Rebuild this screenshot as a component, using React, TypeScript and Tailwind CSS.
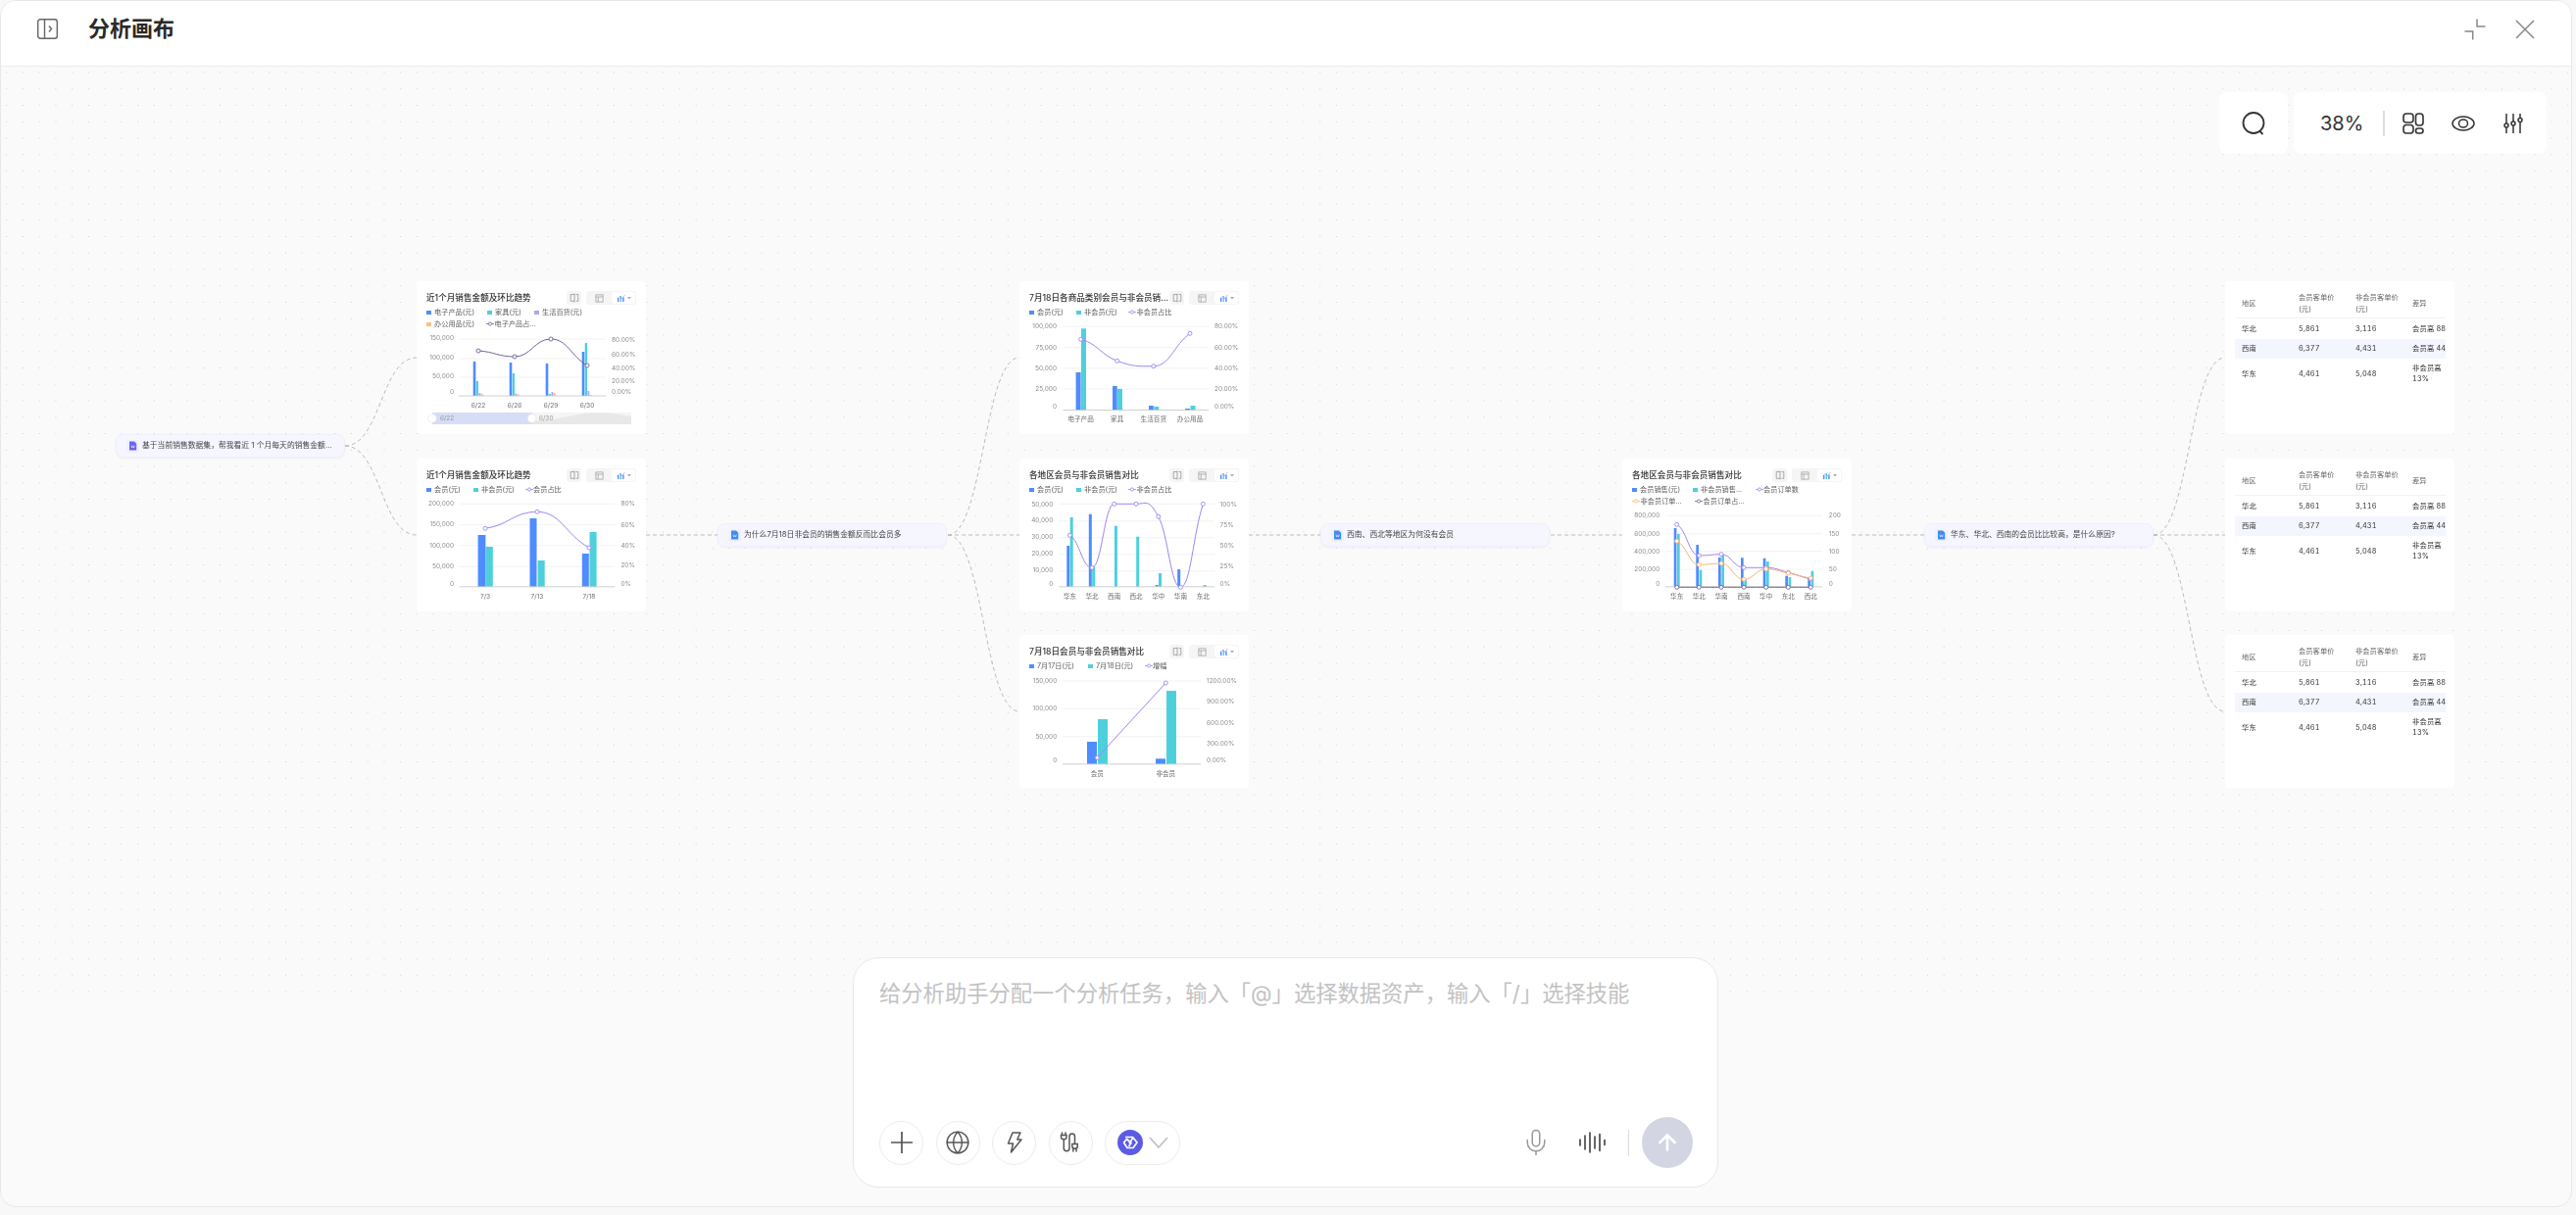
import { ReactNode } from 'react';
import { Mic, ArrowUp, Globe } from 'lucide-react';

const BLUE = '#4f8cff';
const CYAN = '#4ed0dc';
const PURPLE = '#a084f2';
const LILAC = '#b5a2f0';
const ORANGE = '#ffbe85';
const DARK = '#6f6299';

type Legend = { label: string; color: string; line?: boolean; width?: string };
type Bar = [number, number, number, string];
type Series = { color: string; pts: [number, number][]; straight?: boolean };
type ChartDef = {
  title: string;
  legend: Legend[][];
  grid: number[];
  gridX: [number, number];
  left: [string, number][];
  leftEnd: number;
  right: [string, number][];
  rightX: number;
  cats: [string, number][];
  catY: number;
  bars: Bar[];
  lines: Series[];
  slider?: boolean;
};

// monotone-ish curve, flat at local extremes like echarts smooth lines
function linePath(pts: [number, number][], straight?: boolean) {
  if (straight) return pts.map((p, i) => `${i ? 'L' : 'M'}${p[0]} ${p[1]}`).join(' ');
  const slope = pts.map((p, i) => {
    if (i === 0) return ((pts[1][1] - p[1]) / (pts[1][0] - p[0])) * 0.4;
    if (i === pts.length - 1) return ((p[1] - pts[i - 1][1]) / (p[0] - pts[i - 1][0])) * 0.8;
    const a = p[1] - pts[i - 1][1];
    const b = pts[i + 1][1] - p[1];
    if (a * b <= 0) return 0;
    return (pts[i + 1][1] - pts[i - 1][1]) / (pts[i + 1][0] - pts[i - 1][0]);
  });
  let d = `M${pts[0][0]} ${pts[0][1]}`;
  for (let i = 1; i < pts.length; i++) {
    const [x0, y0] = pts[i - 1];
    const [x1, y1] = pts[i];
    const dx = (x1 - x0) * 0.45;
    d += ` C${x0 + dx} ${y0 + slope[i - 1] * dx} ${x1 - dx} ${y1 - slope[i] * dx} ${x1} ${y1}`;
  }
  return d;
}

const memberLegend = (third: string): Legend[][] => [
  [
    { label: '会员(元)', color: BLUE, width: 'w-[48px]' },
    { label: '非会员(元)', color: CYAN, width: 'w-[53px]' },
    { label: third, color: PURPLE, line: true },
  ],
];

const charts: Record<string, ChartDef> = {
  trend: {
    title: '近1个月销售金额及环比趋势',
    legend: [
      [
        { label: '电子产品(元)', color: BLUE, width: 'w-[62px]' },
        { label: '家具(元)', color: CYAN, width: 'w-[48px]' },
        { label: '生活百货(元)', color: LILAC },
      ],
      [
        { label: '办公用品(元)', color: ORANGE, width: 'w-[61px]' },
        { label: '电子产品占...', color: DARK, line: true },
      ],
    ],
    grid: [59, 79, 98],
    gridX: [43, 193],
    left: [['150,000', 58], ['100,000', 78], ['50,000', 97], ['0', 113]],
    leftEnd: 38,
    right: [['80.00%', 60], ['60.00%', 75], ['40.00%', 89], ['20.00%', 102], ['0.00%', 113]],
    rightX: 199,
    cats: [['6/22', 63], ['6/26', 100], ['6/29', 137], ['6/30', 174]],
    catY: 127,
    bars: [
      [57.7, 60.3, 82, BLUE], [60.7, 63, 102, CYAN], [63.5, 65.3, 114, LILAC], [65.7, 67.7, 115, ORANGE],
      [94.7, 97.3, 83, BLUE], [97.7, 100, 94, CYAN], [100.5, 102.3, 114.5, LILAC], [102.7, 104.7, 115.5, ORANGE],
      [131.7, 134.3, 84, BLUE], [134.7, 137, 115, CYAN], [137.5, 139.3, 113, LILAC], [139.7, 141.7, 114, ORANGE],
      [168.7, 171.3, 72, BLUE], [171.7, 174, 63, CYAN], [174.5, 176.3, 112, LILAC], [176.7, 178.7, 116, ORANGE],
    ],
    lines: [{ color: DARK, pts: [[63, 71], [100, 77], [137, 59], [174, 86]] }],
    slider: true,
  },
  monthly: {
    title: '近1个月销售金额及环比趋势',
    legend: [
      [
        { label: '会员(元)', color: BLUE, width: 'w-[48px]' },
        { label: '非会员(元)', color: CYAN, width: 'w-[52.5px]' },
        { label: '会员占比', color: PURPLE, line: true },
      ],
    ],
    grid: [46.3, 67.7, 88.7, 110.3],
    gridX: [43.7, 202.4],
    left: [['200,000', 46], ['150,000', 67], ['100,000', 88.7], ['50,000', 109.3], ['0', 127.3]],
    leftEnd: 38,
    right: [['80%', 46], ['60%', 67.7], ['40%', 88.7], ['20%', 109], ['0%', 127.3]],
    rightX: 208.4,
    cats: [['7/3', 70], ['7/13', 123], ['7/18', 176]],
    catY: 140.3,
    bars: [
      [62.6, 70.4, 78, BLUE], [70.4, 77.8, 90, CYAN],
      [115.5, 122.5, 61, BLUE], [123.6, 130.7, 104, CYAN],
      [168.8, 175.8, 97, BLUE], [176.5, 183.6, 75, CYAN],
    ],
    lines: [{ color: PURPLE, pts: [[70, 71.3], [123, 54.3], [176, 91]] }],
  },
  category: {
    title: '7月18日各商品类别会员与非会员销售额对比',
    legend: memberLegend('非会员占比'),
    grid: [46.3, 67.7, 88.7, 110],
    gridX: [44.6, 193],
    left: [['100,000', 46], ['75,000', 67.3], ['50,000', 88.7], ['25,000', 109.7], ['0', 127.3]],
    leftEnd: 38,
    right: [['80.00%', 46], ['60.00%', 67.3], ['40.00%', 88.7], ['20.00%', 110], ['0.00%', 127.3]],
    rightX: 199,
    cats: [['电子产品', 62.6], ['家具', 99.7], ['生活百货', 136.8], ['办公用品', 174]],
    catY: 141,
    bars: [
      [57.6, 62.6, 93, BLUE], [63, 68, 48.3, CYAN],
      [95, 99.7, 107, BLUE], [100, 105, 110, CYAN],
      [132, 136.8, 127, BLUE], [137.3, 142.3, 128, CYAN],
      [169, 174, 130, BLUE], [174.5, 179.5, 127, CYAN],
    ],
    lines: [{ color: PURPLE, pts: [[62.6, 59.3], [99.7, 81.3], [136.8, 86.7], [174, 53.3]] }],
  },
  region: {
    title: '各地区会员与非会员销售对比',
    legend: memberLegend('非会员占比'),
    grid: [46.3, 63.7, 80.7, 97.7, 114.7],
    gridX: [40, 199],
    left: [['50,000', 46.3], ['40,000', 63], ['30,000', 80], ['20,000', 97], ['10,000', 114], ['0', 127.7]],
    leftEnd: 34.3,
    right: [['100%', 46.3], ['75%', 67.7], ['50%', 88.7], ['25%', 109.3], ['0%', 127.3]],
    rightX: 204.6,
    cats: [['华东', 51.5], ['华北', 74], ['西南', 96.7], ['西北', 119], ['华中', 141.8], ['华南', 164.4], ['东北', 187.4]],
    catY: 140.3,
    bars: [
      [48.3, 51.3, 89, BLUE], [51.7, 54.7, 60, CYAN],
      [70.8, 73.8, 56.7, BLUE], [74.2, 77.2, 110.3, CYAN],
      [96.9, 99.9, 68.7, CYAN],
      [119.2, 122.2, 79.7, CYAN],
      [138.6, 141.6, 129, BLUE], [142, 145, 117, CYAN],
      [161.2, 164.2, 113, BLUE],
      [187.6, 190.6, 129, CYAN],
    ],
    lines: [{ color: PURPLE, pts: [[51.5, 78.3], [74, 111.3], [96.7, 46.3], [119, 46.3], [141.8, 59.3], [164.4, 131.3], [187.4, 46.3]] }],
  },
  compare: {
    title: '7月18日会员与非会员销售对比',
    legend: [
      [
        { label: '7月17日(元)', color: BLUE, width: 'w-[60px]' },
        { label: '7月18日(元)', color: CYAN, width: 'w-[57.5px]' },
        { label: '增幅', color: PURPLE, line: true },
      ],
    ],
    grid: [47, 75.3, 103.7],
    gridX: [44, 185],
    left: [['150,000', 46.7], ['100,000', 75], ['50,000', 103.3], ['0', 128]],
    leftEnd: 38.3,
    right: [['1200.00%', 46.7], ['900.00%', 68], ['600.00%', 89.3], ['300.00%', 110.3], ['0.00%', 128]],
    rightX: 191,
    cats: [['会员', 79.3], ['非会员', 149.3]],
    catY: 141.3,
    bars: [
      [69, 79, 109, BLUE], [80, 90, 86, CYAN],
      [139, 149, 126.3, BLUE], [150, 160, 57, CYAN],
    ],
    lines: [{ color: PURPLE, straight: true, pts: [[79.3, 125.3], [149.3, 49]] }],
  },
  orders: {
    title: '各地区会员与非会员销售对比',
    legend: [
      [
        { label: '会员销售(元)', color: BLUE, width: 'w-[62px]' },
        { label: '非会员销售...', color: CYAN, width: 'w-[63.5px]' },
        { label: '会员订单数', color: PURPLE, line: true },
      ],
      [
        { label: '非会员订单...', color: '#ffb26b', line: true, width: 'w-[64px]' },
        { label: '会员订单占...', color: DARK, line: true },
      ],
    ],
    grid: [58.3, 76.7, 94.7, 113],
    gridX: [44, 204],
    left: [['800,000', 58], ['600,000', 76.3], ['400,000', 94.3], ['200,000', 112.7], ['0', 127.7]],
    leftEnd: 38.3,
    right: [['200', 58], ['150', 76.3], ['100', 94.3], ['50', 112.7], ['0', 127.7]],
    rightX: 210.7,
    cats: [['华东', 55.7], ['华北', 78.3], ['华南', 101], ['西南', 124], ['华中', 146.7], ['东北', 169.3], ['西北', 192.3]],
    catY: 140.3,
    bars: [
      [52.7, 55.4, 71, BLUE], [56, 58.7, 77, CYAN],
      [75.3, 78, 88, BLUE], [78.6, 81.3, 113.7, CYAN],
      [98, 100.7, 101, BLUE], [101.3, 104, 98.7, CYAN],
      [121, 123.7, 101.3, BLUE], [124.3, 127, 123.7, CYAN],
      [143.7, 146.4, 101.7, BLUE], [147, 149.7, 105, CYAN],
      [166.3, 169, 119.7, BLUE], [169.6, 172.3, 121, CYAN],
      [189.3, 192, 122, BLUE], [192.6, 195.3, 114.7, CYAN],
    ],
    lines: [
      { color: DARK, pts: [[55.7, 131.3], [78.3, 131.3], [101, 131.3], [124, 131.3], [146.7, 131.3], [169.3, 131.3], [192.3, 131.3]] },
      { color: PURPLE, pts: [[55.7, 67.3], [78.3, 99], [101, 97.7], [124, 111.3], [146.7, 111.3], [169.3, 116.3], [192.3, 123]] },
      { color: '#ffb26b', pts: [[55.7, 84.3], [78.3, 108.3], [101, 107], [124, 123.3], [146.7, 112.7], [169.3, 117], [192.3, 122]] },
    ],
  },
};

function MiniTools() {
  return (
    <div className="flex shrink-0 items-center gap-[5px]">
      <div className="flex h-[14px] w-[15px] items-center justify-center rounded-[3px] bg-[#f5f5f5]">
        <svg width="10" height="10" viewBox="0 0 10 10" fill="none" stroke="#888" strokeWidth="0.7">
          <path d="M5 1.5 H1.2 V8.3 H5 M5 0.6 V9.4 M6.6 1.5 H8.8 V8.3 H6.6" />
        </svg>
      </div>
      <div className="flex h-[14px] w-[51px] items-center rounded-[3px] bg-[#f5f5f5] px-[1px]">
        <div className="flex flex-1 justify-center">
          <svg width="9" height="9" viewBox="0 0 9 9" fill="none" stroke="#999" strokeWidth="0.7">
            <rect x="0.9" y="0.9" width="7.2" height="7.2" />
            <path d="M0.9 3 H8.1 M3.2 3 V8.1" />
          </svg>
        </div>
        <div className="flex h-[12.5px] w-[24px] items-center justify-center gap-[2px] rounded-[3px] bg-white">
          <svg width="9" height="8" viewBox="0 0 9 8">
            <rect x="1" y="4" width="1.4" height="4" fill={BLUE} />
            <rect x="3.6" y="2" width="1.4" height="6" fill={CYAN} />
            <rect x="6.2" y="3.5" width="1.4" height="4.5" fill={BLUE} />
            <path d="M0.5 5 L3 2.5 L5 5 L8.5 1" fill="none" stroke={PURPLE} strokeWidth="0.6" />
          </svg>
          <svg width="4" height="3" viewBox="0 0 4 3">
            <path d="M0 0 H4 L2 2.5 Z" fill="#aaa" />
          </svg>
        </div>
      </div>
    </div>
  );
}

function LegendItem({ item }: { item: Legend }) {
  return (
    <div className={`flex items-center ${item.width ?? ''}`}>
      {item.line ? (
        <svg width="8" height="5" viewBox="0 0 8 5" className="shrink-0">
          <path d="M0 2.5 H8" stroke={item.color} strokeWidth="0.8" />
          <circle cx="4" cy="2.5" r="1.6" fill="#fff" stroke={item.color} strokeWidth="0.8" />
        </svg>
      ) : (
        <span className="h-[4.5px] w-[4.5px] shrink-0" style={{ background: item.color }} />
      )}
      <span className={`whitespace-nowrap text-[7.2px] text-[#5c5c5c] ${item.line ? 'ml-[0.5px]' : 'ml-[3.5px]'}`}>{item.label}</span>
    </div>
  );
}

function ChartCard({ def, className }: { def: ChartDef; className: string }) {
  const top = def.legend.length === 2 ? 50 : 38;
  const baseline = def.slider ? 117 : def.catY - 9.5;
  return (
    <div className={`absolute flex h-[156px] w-[234px] flex-col rounded-[4px] bg-white blur-[0.2px] ${className}`}>
      <div className="px-[10px] pt-[10px]">
        <div className="flex h-[14px] items-center">
          <div className="min-w-0 flex-1 truncate text-[8.6px] font-medium text-[#333]">{def.title}</div>
          <MiniTools />
        </div>
        <div className="mt-[2px]">
          {def.legend.map((row, i) => (
            <div key={i} className="flex h-[12px] items-center">
              {row.map(item => <LegendItem key={item.label} item={item} />)}
            </div>
          ))}
        </div>
      </div>
      <svg viewBox={`0 ${top} 234 ${156 - top}`} className="block min-h-0 w-full flex-1">
        {def.grid.map(y => <line key={y} x1={def.gridX[0]} x2={def.gridX[1]} y1={y} y2={y} stroke="#eeeeee" strokeWidth="0.7" />)}
        {def.left.map(([t, y]) => <text key={t} x={def.leftEnd} y={y} dy="2.3" textAnchor="end" fontSize="6.5" fill="#8c8c8c">{t}</text>)}
        {def.right.map(([t, y]) => <text key={t} x={def.rightX} y={y} dy="2.3" fontSize="6.5" fill="#8c8c8c">{t}</text>)}
        {def.bars.map(([x0, x1, y, c], i) => <rect key={i} x={x0} y={y} width={x1 - x0} height={baseline - y} fill={c} />)}
        <line x1={def.gridX[0]} x2={def.gridX[1]} y1={baseline} y2={baseline} stroke="#c4c4c4" strokeWidth="0.8" />
        {def.cats.map(([t, x]) => <text key={t} x={x} y={def.catY} dy="2.3" textAnchor="middle" fontSize="6.6" fill="#6e6e6e">{t}</text>)}
        {def.lines.map((s, i) => (
          <g key={i}>
            <path d={linePath(s.pts, s.straight)} fill="none" stroke={s.color} strokeWidth="1" />
            {s.pts.map(([x, y], j) => <circle key={j} cx={x} cy={y} r="2" fill="#fff" stroke={s.color} strokeWidth="0.9" />)}
          </g>
        ))}
        {def.slider && (
          <g>
            <rect x="16" y="134" width="203" height="12" fill="#f5f5f5" />
            <path d="M60 146 C90 146 110 143 140 141 C155 138 170 134 185 134 C200 134 210 137 219 138 V146 Z" fill="#e8e8e8" />
            <rect x="16" y="134" width="102" height="12" fill="#d6def7" />
            <circle cx="16" cy="140" r="4.4" fill="#fff" stroke="#ddd" strokeWidth="0.5" />
            <circle cx="117.5" cy="140" r="4.4" fill="#fff" stroke="#ddd" strokeWidth="0.5" />
            <text x="24" y="142.3" fontSize="6.5" fill="#999">6/22</text>
            <text x="125" y="142.3" fontSize="6.5" fill="#999">6/30</text>
          </g>
        )}
      </svg>
    </div>
  );
}

const tableRows = [
  ['华北', '5,861', '3,116', '会员高 88%'],
  ['西南', '6,377', '4,431', '会员高 44%'],
  ['华东', '4,461', '5,048', '非会员高 13%'],
];

function TableCard({ className }: { className: string }) {
  return (
    <div className={`absolute h-[156px] w-[234px] rounded-[4px] bg-white pl-[10px] pt-[8px] tabular-nums blur-[0.2px] ${className}`}>
      <div className="w-[215px] overflow-hidden">
        <table className="w-[232px] table-fixed border-collapse text-[7.3px] leading-[11.4px]">
          <thead>
            <tr className="h-[29.5px] border-b border-[#f2f2f2] text-left text-[#666]">
              <th className="px-[7px] font-normal">地区</th>
              <th className="px-[7px] font-normal">会员客单价<br />(元)</th>
              <th className="whitespace-nowrap px-[7px] font-normal">非会员客单价<br />(元)</th>
              <th className="px-[7px] font-normal">差异</th>
            </tr>
          </thead>
          <tbody className="text-[#333]">
            {tableRows.map((row, i) => (
              <tr key={row[0]} className={i === 1 ? 'h-[20px] bg-[#f3f6fd]' : i === 0 ? 'h-[21.5px]' : 'h-[30.5px]'}>
                {row.map(cell => <td key={cell} className="px-[7px] tracking-[0.15px]">{cell}</td>)}
              </tr>
            ))}
          </tbody>
        </table>
      </div>
    </div>
  );
}

function NodeIcon({ color }: { color: string }) {
  return (
    <div className="flex h-[13px] w-[13px] shrink-0 items-center justify-center rounded-[3px] bg-[#eef0fb]">
      <svg width="9" height="10" viewBox="0 0 9 10">
        <path d="M1 0.5 H6 L8.2 2.7 V9.5 H1 Z" fill={color} />
        <path d="M3 4.5 L3.6 7 L4.6 5.4 L5.6 7 L6.2 4.5" fill="none" stroke="#fff" strokeWidth="0.6" />
      </svg>
    </div>
  );
}

function QuestionNode({ text, color, className }: { text: string; color: string; className: string }) {
  return (
    <div className={`absolute flex h-[24px] w-[234px] items-center gap-[3px] rounded-[8px] border border-[#eff0fa] bg-[#f5f6ff] pl-[10px] shadow-[0_1px_2px_rgba(90,90,160,0.08)] blur-[0.15px] ${className}`}>
      <NodeIcon color={color} />
      <span className="whitespace-nowrap text-[7.8px] text-[#444]">{text}</span>
    </div>
  );
}

function curve(x0: number, y0: number, x1: number, y1: number) {
  const mid = (x0 + x1) / 2;
  return `M${x0} ${y0} C${mid} ${y0} ${mid} ${y1} ${x1} ${y1}`;
}

// canvas coordinates: page x - 1, page y - 68
const edges = [
  curve(351, 387, 424, 297), curve(351, 387, 424, 478),
  curve(658, 478, 731, 478),
  curve(966, 478, 1039, 297), curve(966, 478, 1039, 478), curve(966, 478, 1039, 658),
  curve(1273, 478, 1346, 478),
  curve(1581, 478, 1654, 478),
  curve(1888, 478, 1962, 478),
  curve(2196, 478, 2269, 297), curve(2196, 478, 2269, 478), curve(2196, 478, 2269, 658),
];

function RoundBtn({ children, className = 'w-[45px]' }: { children: ReactNode; className?: string }) {
  return (
    <button className={`flex h-[45px] items-center justify-center rounded-full border border-[#ececec] bg-white ${className}`}>
      {children}
    </button>
  );
}

function Composer() {
  return (
    <div className="absolute bottom-[19px] left-[869px] flex h-[235px] w-[883px] flex-col justify-between rounded-[26px] border border-[#e8e8e8] bg-white pb-[19px] pl-[26px] pr-[25px] pt-[21px]">
      <div className="text-[22.3px] leading-[30px] text-[#c2c2c2]">给分析助手分配一个分析任务，输入「@」选择数据资产，输入「/」选择技能</div>
      <div className="flex items-center">
        <div className="flex items-center gap-[12.5px]">
          <RoundBtn>
            <svg width="24" height="24" viewBox="0 0 24 24" stroke="#555" strokeWidth="1.7">
              <path d="M1 12 H23 M12 1 V23" />
            </svg>
          </RoundBtn>
          <RoundBtn><Globe size={26} strokeWidth={1.3} color="#555" /></RoundBtn>
          <RoundBtn>
            <svg width="24" height="24" viewBox="0 0 24 24" fill="none" stroke="#555" strokeWidth="1.5" strokeLinejoin="round">
              <path d="M10 2 H18 L14.8 9 H19 L8.5 22 L10.5 13 H5.5 Z" />
            </svg>
          </RoundBtn>
          <RoundBtn>
            <svg width="24" height="24" viewBox="0 0 24 24" fill="none" stroke="#555" strokeWidth="1.5" strokeLinecap="round">
              <path d="M3.5 2 V4.5 M7 2 V4.5 M2.5 4.5 H8 V6.5 C8 8 6.8 8.8 5.3 8.8 C3.8 8.8 2.5 8 2.5 6.5 Z" />
              <path d="M5.3 9 V18 C5.3 21.5 11 21.5 11 18 V6 C11 2 16.5 2 16.5 6 V13.5" />
              <path d="M13.8 13.5 H19.3 V15.8 C19.3 17.3 18 18.3 16.5 18.3 C15 18.3 13.8 17.3 13.8 15.8 Z M14.9 18.3 V21 M18.1 18.3 V21" />
            </svg>
          </RoundBtn>
          <RoundBtn className="w-[77px] gap-[6px]">
            <svg width="26" height="26" viewBox="0 0 26 26" fill="none">
              <circle cx="13" cy="13" r="13" fill="#5c5be5" />
              <path d="M8 7.5 H15.5 L20 13 L16 18.5 H10 L6.5 13 L9.5 9.5 L14 13.5 L11.5 17 M16 8 L12 14" stroke="#fff" strokeWidth="1.7" strokeLinejoin="round" />
            </svg>
            <svg width="20" height="12" viewBox="0 0 20 12" fill="none" stroke="#bbb" strokeWidth="1.5">
              <path d="M1 1 L10 11 L19 1" />
            </svg>
          </RoundBtn>
        </div>
        <div className="ml-auto flex items-center">
          <Mic size={30} strokeWidth={1.2} color="#999" />
          <svg width="30" height="24" viewBox="0 0 30 24" stroke="#333" strokeWidth="1.5" strokeLinecap="round" className="ml-[28px]">
            <path d="M2 9 V15 M7 5 V19 M12 2 V22 M17 6 V18 M22 3.5 V20.5 M27 9.5 V14.5" />
          </svg>
          <div className="ml-[21px] h-[27px] w-px bg-[#ddd]" />
          <div className="ml-[13px] flex h-[52px] w-[52px] items-center justify-center rounded-full bg-[#d3d6e2]">
            <ArrowUp size={26} strokeWidth={2.4} color="#fff" />
          </div>
        </div>
      </div>
    </div>
  );
}

function ZoomTools() {
  return (
    <div className="absolute right-[25px] top-[26px] flex gap-[6px]">
      <div className="flex h-[63px] w-[70px] items-center justify-center rounded-[8px] bg-white">
        <svg width="26" height="26" viewBox="0 0 26 26" fill="none" stroke="#333" strokeWidth="1.8">
          <circle cx="13" cy="12.5" r="10.5" />
          <path d="M19.5 21 L22.5 24" />
        </svg>
      </div>
      <div className="flex h-[63px] w-[258px] items-center rounded-[8px] bg-white pl-[27px]">
        <span className="w-[44px] text-[20px] text-[#333]">38%</span>
        <div className="ml-[20px] h-[26px] w-[2px] bg-[#ddd]" />
        <svg width="22" height="22" viewBox="0 0 22 22" fill="none" stroke="#333" strokeWidth="1.6" className="ml-[18px]">
          <rect x="1" y="1" width="10" height="9" rx="3" />
          <rect x="1" y="12.5" width="10" height="8.5" rx="3" />
          <rect x="13.5" y="1" width="7.5" height="12" rx="3" />
          <rect x="13.5" y="16" width="7.5" height="5" rx="2.5" />
        </svg>
        <svg width="24" height="16" viewBox="0 0 24 16" fill="none" stroke="#333" strokeWidth="1.5" className="ml-[28px]">
          <ellipse cx="12" cy="8" rx="11" ry="7" />
          <ellipse cx="12" cy="8" rx="4.5" ry="4" />
        </svg>
        <svg width="22" height="22" viewBox="0 0 22 22" fill="none" stroke="#333" strokeWidth="1.5" className="ml-[28px]">
          <path d="M4 1 V21 M11 1 V21 M18 1 V21" />
          <circle cx="4" cy="13" r="2" fill="#fff" />
          <circle cx="11" cy="11" r="2" fill="#fff" />
          <circle cx="18" cy="7.5" r="2" fill="#fff" />
        </svg>
      </div>
    </div>
  );
}

export default function App() {
  return (
    <div className="h-[1240px] w-[2628px] bg-[#f8f8f8] [font-family:Inter,'Noto_Sans_CJK_SC',sans-serif]">
      <div className="flex h-[1232px] w-[2624px] flex-col overflow-hidden rounded-[16px] border border-[#e8e8e8] bg-[#fafafa]">
        <header className="flex h-[67px] shrink-0 items-center border-b border-[#ececec] bg-white pb-[9px]">
          <svg width="21" height="21" viewBox="0 0 21 21" fill="none" stroke="#666" strokeWidth="1.4" className="ml-[37px]">
            <rect x="0.7" y="0.7" width="19.6" height="19.6" rx="2.5" />
            <path d="M7.5 0.7 V20.3" />
            <path d="M12 7.5 L14.5 10.5 L12 13.5" />
          </svg>
          <h1 className="ml-[31px] text-[22px] font-semibold text-[#2a2a2a]">分析画布</h1>
          <div className="ml-auto mr-[37px] flex items-center gap-[30px]">
            <svg width="22" height="22" viewBox="0 0 22 22" fill="none" stroke="#888" strokeWidth="1.5">
              <path d="M13 0.5 V8 H21.5 M0.5 13 H8.7 V21.5" />
            </svg>
            <svg width="20" height="20" viewBox="0 0 20 20" fill="none" stroke="#888" strokeWidth="1.5">
              <path d="M1 1 L19 19 M19 1 L1 19" />
            </svg>
          </div>
        </header>

        <main className="relative min-h-0 flex-1">
          <div className="absolute inset-x-0 top-0 h-[960px] bg-[radial-gradient(circle,#d0d0d0_0.6px,transparent_1px)] bg-position-[-2.7px_-2.4px] bg-size-[16.75px_16.75px]" />
          <svg width="2622" height="800" className="absolute left-0 top-0" fill="none" stroke="#bbb" strokeWidth="1" strokeDasharray="4 3">
            {edges.map((d, i) => <path key={i} d={d} />)}
          </svg>

          <QuestionNode className="left-[117px] top-[375px]" color="#6c63f5" text="基于当前销售数据集，帮我看近 1 个月每天的销售金额…" />
          <QuestionNode className="left-[731px] top-[466px]" color="#3f8cf5" text="为什么7月18日非会员的销售金额反而比会员多" />
          <QuestionNode className="left-[1346px] top-[466px]" color="#3f8cf5" text="西南、西北等地区为何没有会员" />
          <QuestionNode className="left-[1962px] top-[466px]" color="#3f8cf5" text="华东、华北、西南的会员比比较高，是什么原因?" />

          <ChartCard className="left-[424px] top-[219px]" def={charts.trend} />
          <ChartCard className="left-[424px] top-[400px]" def={charts.monthly} />
          <ChartCard className="left-[1039px] top-[219px]" def={charts.category} />
          <ChartCard className="left-[1039px] top-[400px]" def={charts.region} />
          <ChartCard className="left-[1039px] top-[580px]" def={charts.compare} />
          <ChartCard className="left-[1654px] top-[400px]" def={charts.orders} />

          <TableCard className="left-[2269px] top-[219px]" />
          <TableCard className="left-[2269px] top-[400px]" />
          <TableCard className="left-[2269px] top-[580px]" />

          <ZoomTools />
          <Composer />
        </main>
      </div>
    </div>
  );
}
